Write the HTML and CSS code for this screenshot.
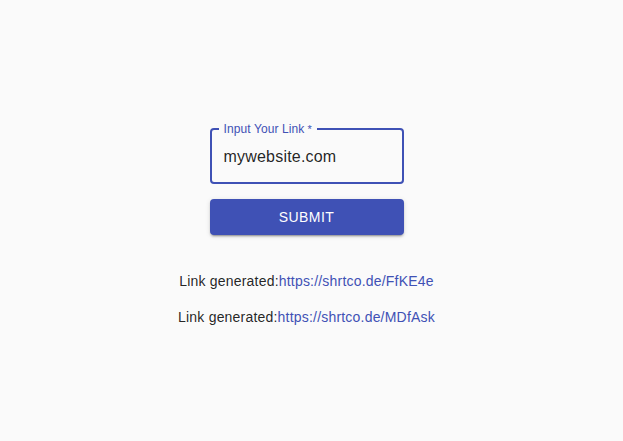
FILE: index.html
```html
<!DOCTYPE html>
<html>
<head>
<meta charset="utf-8">
<link rel="stylesheet" href="styles.css">
</head>
<body>
<main class="page">
  <form class="form">
    <div class="field">
      <span class="field-label">Input Your Link<span class="req"> *</span></span>
      <input class="field-input" type="text" value="mywebsite.com">
    </div>
    <button class="submit" type="button">Submit</button>
  </form>
  <div class="results">
    <p class="result">Link generated:<a href="#">https://shrtco.de/FfKE4e</a></p>
    <p class="result">Link generated:<a href="#">https://shrtco.de/MDfAsk</a></p>
  </div>
</main>
</body>
</html>
```
FILE: styles.css
```css
html, body {
  margin: 0;
  background: #fafafa;
  font-family: "Liberation Sans", Arial, Helvetica, sans-serif;
  color: rgba(0, 0, 0, 0.87);
}
.page {
  display: flex;
  flex-direction: column;
  align-items: center;
  padding: 128px 10px 0 0;
}
.form {
  width: 194px;
  display: flex;
  flex-direction: column;
  gap: 15px;
}
.field {
  position: relative;
  height: 56px;
  box-sizing: border-box;
  border: 2px solid #3f51b5;
  border-radius: 4px;
  display: flex;
  align-items: center;
}
.field-label {
  position: absolute;
  left: 7px;
  top: -8px;
  padding: 0 5px 0 5px;
  background: #fafafa;
  font-size: 12px;
  line-height: 14px;
  letter-spacing: 0.1px;
  color: #3f51b5;
}
.req { font-size: 11px; }
.field-input {
  border: 0;
  outline: none;
  background: transparent;
  font-family: inherit;
  font-size: 16px;
  letter-spacing: 0.2px;
  color: rgba(0, 0, 0, 0.87);
  padding: 0 12px;
  width: 100%;
  box-sizing: border-box;
  margin-top: 1px;
}
.submit {
  height: 36px;
  border: 0;
  border-radius: 4px;
  background: #3f51b5;
  color: #fff;
  font-family: inherit;
  font-size: 14px;
  letter-spacing: 0.03em;
  text-transform: uppercase;
  box-shadow: 0 3px 1px -2px rgba(0,0,0,0.2), 0 2px 2px 0 rgba(0,0,0,0.14), 0 1px 5px 0 rgba(0,0,0,0.12);
}
.results {
  margin-top: 36px;
  display: flex;
  flex-direction: column;
  align-items: center;
  gap: 16px;
}
.result {
  margin: 0;
  font-size: 14px;
  line-height: 20px;
  letter-spacing: 0.2px;
}
.result a {
  color: #3f51b5;
  text-decoration: none;
}
```
